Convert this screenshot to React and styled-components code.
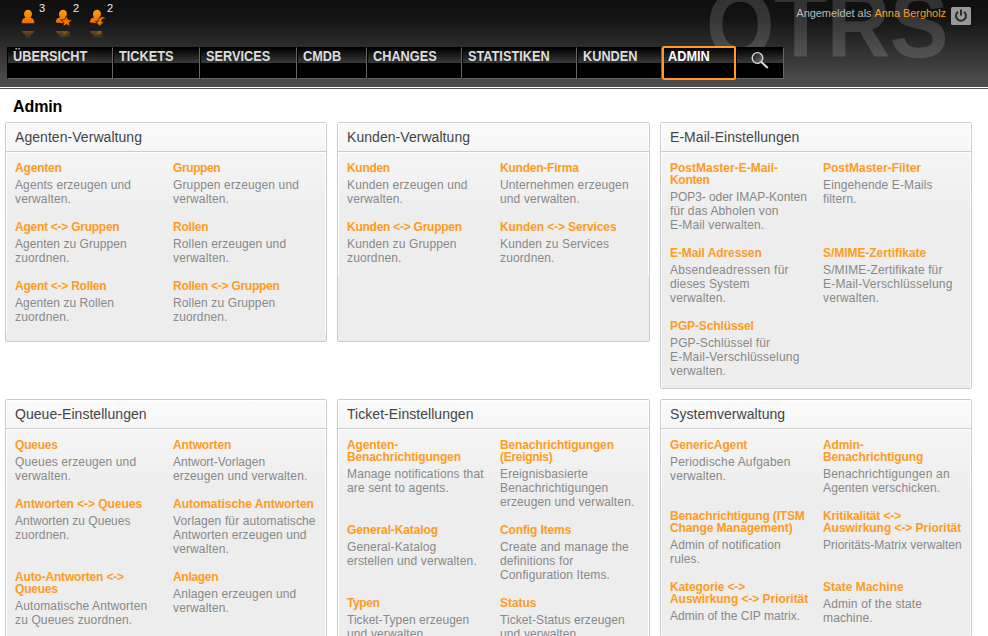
import React from "react";
import styled, { createGlobalStyle } from "styled-components";

const GlobalStyle = createGlobalStyle`
  * { box-sizing: border-box; }
  html, body { margin: 0; overflow: hidden; background: #fff; }
  body { font: 12px/14px "Liberation Sans", Arial, sans-serif; color: #888; }
`;

const Page = styled.div`
  width: 988px;
  height: 636px;
  overflow: hidden;
`;
const Header = styled.header`
  position: relative;
  height: 87px;
  overflow: hidden;
  background: linear-gradient(#0f0f0f 0, #131313 18px, #4b4b4b 80px, #4d4d4d);
`;
const Rule = styled.div`
  height: 2px;
  border-bottom: 1px solid #555;
`;
const Watermark = styled.div`
  position: absolute;
  left: 706px;
  top: -41px;
  font-size: 88px;
  line-height: 136px;
  font-weight: bold;
  letter-spacing: -0.7px;
  color: rgba(255, 255, 255, 0.15);
  white-space: nowrap;
  transform: scaleY(1.07);
  transform-origin: 0 98px;
`;
const TopBar = styled.div`
  position: relative;
  display: flex;
  justify-content: space-between;
  height: 47px;
  padding: 0 17px 0 20px;
`;
const Indicators = styled.div`
  display: flex;
`;
const Indicator = styled.div`
  display: flex;
  width: 34px;
  svg { margin-top: 8px; flex: none; }
`;
const Count = styled.span`
  padding-top: 1px;
  font-size: 11px;
  color: #eee;
`;
const Login = styled.div`
  display: flex;
  padding-top: 6px;
  font-size: 11px;
  letter-spacing: -0.05px;
  color: #bbb;
  svg { margin-top: 1px; }
`;
const UserName = styled.span`
  margin: 0 5px 0 3px;
  color: #ff9b21;
`;
const Nav = styled.nav`
  position: relative;
  display: flex;
  height: 32px;
  margin-left: 7px;
`;
const Tab = styled.div`
  width: ${(p) => p.$w}px;
  padding: 1px 0 0 5px;
  border-top: 1px solid #000;
  border-right: 1px solid #666;
  border-bottom: 1px solid #666;
  border-left: 1px solid #000;
  background: linear-gradient(#000 0, #3a3a3a 15px, #000 15px);
  color: #ddd;
  font-size: 14px;
  font-weight: bold;
`;
const TabLabel = styled.span`
  display: block;
  transform: scaleX(0.91);
  transform-origin: 0 0;
`;
const ActiveTab = styled(Tab)`
  height: 34px;
  margin: -1px 0;
  padding: 1px 0 0 4px;
  border: 2px solid #ff9b21;
  border-radius: 2px;
  color: #fff;
`;
const SearchTab = styled(Tab)`
  padding: 4px 0 0 14px;
`;
const Main = styled.main`
  padding: 7px 0 0 5px;
`;
const Title = styled.h1`
  margin: 0 0 5px 8px;
  height: 21px;
  font-size: 16px;
  line-height: 21px;
  letter-spacing: -0.1px;
  color: #000;
`;
const Grid = styled.div`
  display: grid;
  grid-template-columns: 322px 313px 312px;
  gap: 10px;
  align-items: start;
`;
const Panel = styled.section`
  min-height: 220px;
  border: 1px solid #ccc;
  border-radius: 2px;
  background: #ededed;
  &:nth-child(n + 4) { min-height: 260px; }
`;
const PanelTitle = styled.h2`
  margin: 0;
  height: 29px;
  padding-left: 8px;
  border: 1px solid #fff;
  border-bottom: 0;
  background: linear-gradient(#fafafa, #f5f5f5);
  color: #444;
  font-size: 14px;
  line-height: 27px;
  font-weight: normal;
  letter-spacing: 0.05px;
`;
const Entries = styled.div`
  display: grid;
  grid-template-columns: ${(p) => p.$first}px 1fr;
  row-gap: 15px;
  padding: 9px 0 10px 8px;
  border: 1px solid #fff;
  border-bottom: 0;
  box-shadow: 0 -1px #ccc;
  background: linear-gradient(#f5f5f5, #ededed 60px);
`;
const Line = styled.span`
  display: block;
  white-space: nowrap;
  letter-spacing: ${(p) => p.$ls}px;
`;
const EntryTitle = styled.h3`
  margin: 0 0 4px;
  color: #ff9b21;
  font-size: 12px;
  line-height: 12px;
`;
const EntryText = styled.p`
  margin: 0;
`;

const Person = ({ kind, id }) => (
  <svg width="19" height="32" viewBox="0 0 19 32">
    <defs>
      <linearGradient id={"g" + id} x1="0" y1="2" x2="0" y2="16" gradientUnits="userSpaceOnUse">
        <stop offset="0" stopColor="#ff9a08" />
        <stop offset="1" stopColor="#ee6800" />
      </linearGradient>
      <linearGradient id={"r" + id} x1="0" y1="22.5" x2="0" y2="31" gradientUnits="userSpaceOnUse">
        <stop offset="0" stopColor="#c07418" stopOpacity=".55" />
        <stop offset="1" stopColor="#c07418" stopOpacity="0" />
      </linearGradient>
    </defs>
    <g fill={`url(#g${id})`} transform={kind ? "rotate(6 8 15)" : undefined}>
      <ellipse cx="8" cy="6" rx="4" ry="4.3" />
      <path d="M5.2 7.500L10.800 7.500L10.800 9.800Q13.800 10.600 14.100 13L14.300 15.200L1.700 15.200L1.900 13Q2.200 10.600 5.200 9.800Z" />
    </g>
    <path fill={`url(#r${id})`} d="M2 23h12.200c-.2 2-1.600 3-3.600 3.600L11 31H5l.5-4.400C3.500 26 2.200 25 2 23z" />
    {kind === "star" && (
      <>
        <path fill="#f27400" stroke="#1c1c1c" strokeWidth=".8" d="M12.500 7.800l1.600 3.800 4.300.3-3.300 2.700 1.100 4.100-3.700-2.300-3.700 2.300 1.100-4.100-3.300-2.700 4.300-.3z" />
        <path fill={`url(#r${id})`} d="M9 23l3.500 2 3.500-2-.8 3.400 3 1.600-4 .6-1.700 3-1.700-3-4-.6 3-1.600z" />
      </>
    )}
    {kind === "arrow" && (
      <>
        <path fill="#f27400" stroke="#1c1c1c" strokeWidth=".8" d="M18.300 11.500c-1-2.500-3.200-3.300-5.200-2.500-2 .7-3 2.300-3 4.300H7.400l4.300 5 4.300-5h-2.700c.2-2.300 2.700-3.300 5-1.800z" />
        <path fill={`url(#r${id})`} d="M11.500 22.500l4 4h-2.300c.2 2 2.300 2.800 4.800 1.500-2 3.500-7.500 3-7.700-1.500H7.500z" />
      </>
    )}
  </svg>
);

const Power = () => (
  <svg width="20" height="18" viewBox="0 0 20 18">
    <rect width="20" height="18" rx="1.500" fill="#999" />
    <path d="M7 4.700a5 5 0 1 0 6 0M10 2.500v6" fill="none" stroke="#2a2a2a" strokeWidth="2" />
  </svg>
);

const Search = () => (
  <svg width="18" height="18" viewBox="0 0 18 18">
    <defs>
      <linearGradient id="lens" x1="0" y1="0" x2="1" y2="1">
        <stop offset="0" stopColor="#111" />
        <stop offset="1" stopColor="#777" />
      </linearGradient>
    </defs>
    <circle cx="6.500" cy="6" r="5.300" fill="url(#lens)" stroke="#ddd" strokeWidth="1.300" />
    <path d="M10.300 10l6.500 6" stroke="#ddd" strokeWidth="2" />
  </svg>
);

const tabs = [
  ["ÜBERSICHT", 106], ["TICKETS", 87], ["SERVICES", 97], ["CMDB", 70],
  ["CHANGES", 95], ["STATISTIKEN", 115], ["KUNDEN", 85],
];

const panels = [
  ["Agenten-Verwaltung", 158, [
    ["Agenten", "Agents erzeugen und|verwalten."],
    ["Gruppen", "Gruppen erzeugen und|verwalten."],
    ["Agent <-> Gruppen", "Agenten zu Gruppen|zuordnen."],
    ["Rollen", "Rollen erzeugen und|verwalten."],
    ["Agent <-> Rollen", "Agenten zu Rollen|zuordnen."],
    ["Rollen <-> Gruppen", "Rollen zu Gruppen|zuordnen."],
  ]],
  ["Kunden-Verwaltung", 153, [
    ["Kunden", "Kunden erzeugen und|verwalten."],
    ["Kunden-Firma", "Unternehmen erzeugen|und verwalten."],
    ["Kunden <-> Gruppen", "Kunden zu Gruppen|zuordnen."],
    ["Kunden <-> Services", "Kunden zu Services|zuordnen."],
  ]],
  ["E-Mail-Einstellungen", 153, [
    ["PostMaster-E-Mail-|Konten", "POP3- oder IMAP-Konten|für das Abholen von|E-Mail verwalten."],
    ["PostMaster-Filter", "Eingehende E-Mails|filtern."],
    ["E-Mail Adressen", "Absendeadressen für|dieses System|verwalten."],
    ["S/MIME-Zertifikate", "S/MIME-Zertifikate für|E-Mail-Verschlüsselung|verwalten."],
    ["PGP-Schlüssel", "PGP-Schlüssel für|E-Mail-Verschlüsselung|verwalten."],
  ]],
  ["Queue-Einstellungen", 158, [
    ["Queues", "Queues erzeugen und|verwalten."],
    ["Antworten", "Antwort-Vorlagen|erzeugen und verwalten."],
    ["Antworten <-> Queues", "Antworten zu Queues|zuordnen."],
    ["Automatische Antworten", "Vorlagen für automatische|Antworten erzeugen und|verwalten."],
    ["Auto-Antworten <->|Queues", "Automatische Antworten|zu Queues zuordnen."],
    ["Anlagen", "Anlagen erzeugen und|verwalten."],
  ]],
  ["Ticket-Einstellungen", 153, [
    ["Agenten-|Benachrichtigungen", "Manage notifications that|are sent to agents."],
    ["Benachrichtigungen|(Ereignis)", "Ereignisbasierte|Benachrichtigungen|erzeugen und verwalten."],
    ["General-Katalog", "General-Katalog|erstellen und verwalten."],
    ["Config Items", "Create and manage the|definitions for|Configuration Items."],
    ["Typen", "Ticket-Typen erzeugen|und verwalten."],
    ["Status", "Ticket-Status erzeugen|und verwalten."],
  ]],
  ["Systemverwaltung", 153, [
    ["GenericAgent", "Periodische Aufgaben|verwalten."],
    ["Admin-|Benachrichtigung", "Benachrichtigungen an|Agenten verschicken."],
    ["Benachrichtigung (ITSM|Change Management)", "Admin of notification|rules."],
    ["Kritikalität <->|Auswirkung <-> Priorität", "Prioritäts-Matrix verwalten"],
    ["Kategorie <->|Auswirkung <-> Priorität", "Admin of the CIP matrix."],
    ["State Machine", "Admin of the state|machine."],
  ]],
];

// Letter spacing of single headings; all others use the default.
const titleSpacing = {
  "Agenten": -0.18, "Gruppen": -0.4, "Agent <-> Gruppen": -0.25, "Rollen": -0.2,
  "Agent <-> Rollen": -0.25, "Rollen <-> Gruppen": -0.27, "Kunden": -0.3,
  "Kunden-Firma": -0.23, "Kunden <-> Gruppen": -0.25, "PostMaster-E-Mail-": 0,
  "Konten": -0.3, "PostMaster-Filter": 0, "S/MIME-Zertifikate": -0.05, "Queues": -0.2,
  "Antworten <-> Queues": -0.05, "Automatische Antworten": -0.03,
  "Auto-Antworten <->": -0.17, "Anlagen": -0.3, "(Ereignis)": -0.3, "Typen": -0.4,
  "Status": -0.05, "Benachrichtigung (ITSM": -0.15, "State Machine": 0,
  "Auswirkung <-> Priorität": -0.05, "E-Mail Adressen": -0.08,
};
const textSpacing = {
  "POP3- oder IMAP-Konten": -0.06, "Absendeadressen für": 0.25,
  "E-Mail-Verschlüsselung": 0.19, "Benachrichtigungen an": 0.19,
  "Periodische Aufgaben": 0.19, "Prioritäts-Matrix verwalten": 0,
  "Admin of the CIP matrix.": 0.01, "Antwort-Vorlagen": 0, "Agenten zu Gruppen": 0.05,
  "Agenten zu Rollen": 0.05, "Antworten zu Queues": 0, "Agents erzeugen und": 0.1,
  "Ticket-Typen erzeugen": 0.03, "Ticket-Status erzeugen": 0.08,
};

const Lines = ({ text, spacing, base }) =>
  text.split("|").map((t) => <Line key={t} $ls={spacing[t] ?? base}>{t}</Line>);

export default function App() {
  return (
    <Page>
      <GlobalStyle />
      <Header>
        <Watermark>OTRS</Watermark>
        <TopBar>
          <Indicators>
            <Indicator><Person id="a" /><Count>3</Count></Indicator>
            <Indicator><Person id="b" kind="star" /><Count>2</Count></Indicator>
            <Indicator><Person id="c" kind="arrow" /><Count>2</Count></Indicator>
          </Indicators>
          <Login>Angemeldet als <UserName>Anna Bergholz</UserName><Power /></Login>
        </TopBar>
        <Nav>
          {tabs.map(([label, w]) => <Tab key={label} $w={w}><TabLabel>{label}</TabLabel></Tab>)}
          <ActiveTab $w={74}><TabLabel>ADMIN</TabLabel></ActiveTab>
          <SearchTab $w={48}><Search /></SearchTab>
        </Nav>
      </Header>
      <Rule />
      <Main>
        <Title>Admin</Title>
        <Grid>
          {panels.map(([title, first, entries]) => (
            <Panel key={title}>
              <PanelTitle>{title}</PanelTitle>
              <Entries $first={first}>
                {entries.map(([name, text]) => (
                  <div key={name}>
                    <EntryTitle><Lines text={name} spacing={titleSpacing} base={-0.12} /></EntryTitle>
                    <EntryText><Lines text={text} spacing={textSpacing} base={0.13} /></EntryText>
                  </div>
                ))}
              </Entries>
            </Panel>
          ))}
        </Grid>
      </Main>
    </Page>
  );
}
